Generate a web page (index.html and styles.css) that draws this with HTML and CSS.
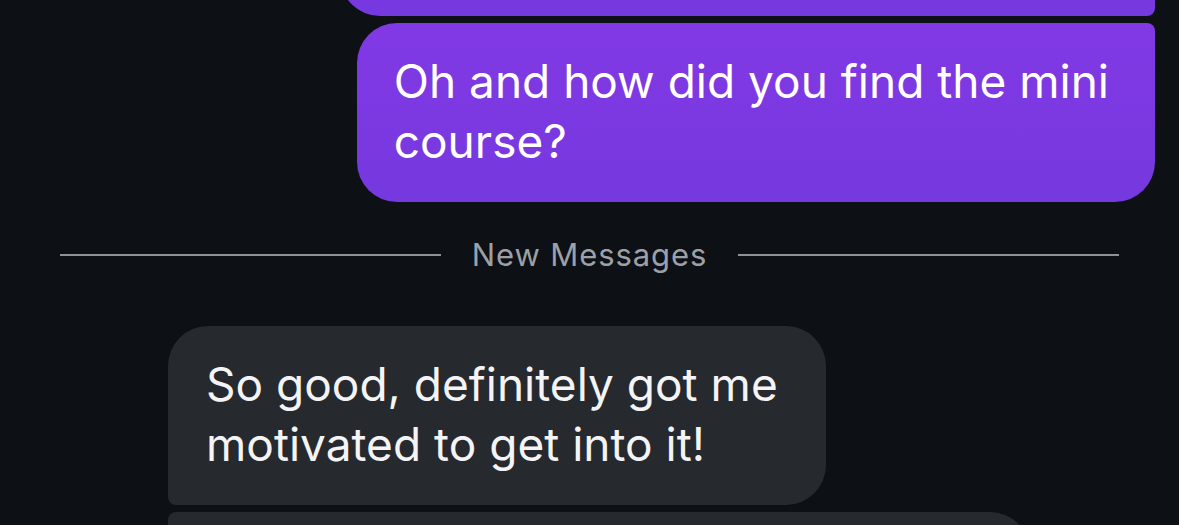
FILE: index.html
```html
<!DOCTYPE html>
<html lang="en">
<head>
<meta charset="utf-8">
<title>Chat</title>
<link rel="stylesheet" href="styles.css">
</head>
<body>
<main class="chat">
  <div class="row row-sent">
    <div class="bubble sent sent-first">That sounds amazing, I'm really glad it went well</div>
  </div>
  <div class="row row-sent">
    <div class="bubble sent sent-last">Oh and how did you find the mini<br>course?</div>
  </div>

  <div class="divider">
    <span class="divider-line"></span>
    <span class="divider-label">New Messages</span>
    <span class="divider-line"></span>
  </div>

  <div class="row row-received">
    <div class="avatar-slot"></div>
    <div class="bubble received received-first">So good, definitely got me<br>motivated to get into it!</div>
  </div>
  <div class="row row-received">
    <div class="avatar-slot"></div>
    <div class="bubble received received-mid">I've already started planning my first week</div>
  </div>
</main>
</body>
</html>
```

FILE: styles.css
```css
html, body {
  margin: 0;
  padding: 0;
  background: #0d1014;
  height: 100%;
  overflow: hidden;
}

body {
  font-family: Inter, "Noto Sans", "DejaVu Sans", sans-serif;
  color: #f7f7f9;
}

.chat {
  display: flex;
  flex-direction: column;
  gap: 7px;
  padding: 0 24px;
  margin-top: -103px;
}

.row {
  display: flex;
}

.row-sent {
  justify-content: flex-end;
}

.row-received {
  justify-content: flex-start;
  gap: 24px;
}

.avatar-slot {
  width: 120px;
  flex: none;
}

.bubble {
  font-size: 46px;
  line-height: 60px;
  padding: 28px 46px 31px 37px;
}

.sent {
  background: linear-gradient(180deg, #8139e4 0%, #7638df 100%);
  color: #ffffff;
}

.sent-first {
  border-radius: 40px 8px 8px 40px;
  width: 732px;
  white-space: nowrap;
  overflow: hidden;
}

.sent-last {
  border-radius: 40px 8px 40px 40px;
}

.received {
  background: #26292e;
  color: #f4f4f6;
  padding-left: 38px;
  padding-right: 48px;
}

.received-first {
  border-radius: 40px 40px 40px 8px;
}

.received-mid {
  border-radius: 8px 40px 40px 8px;
  width: 776px;
  white-space: nowrap;
  overflow: hidden;
}

.divider {
  display: flex;
  align-items: center;
  gap: 31px;
  margin: 28px 36px 46px 36px;
}

.divider-line {
  flex: 1;
  height: 2px;
  background: #8d9198;
}

.divider-label {
  font-size: 31px;
  line-height: 36px;
  color: #9ca0a8;
  letter-spacing: 0.9px;
}
```
